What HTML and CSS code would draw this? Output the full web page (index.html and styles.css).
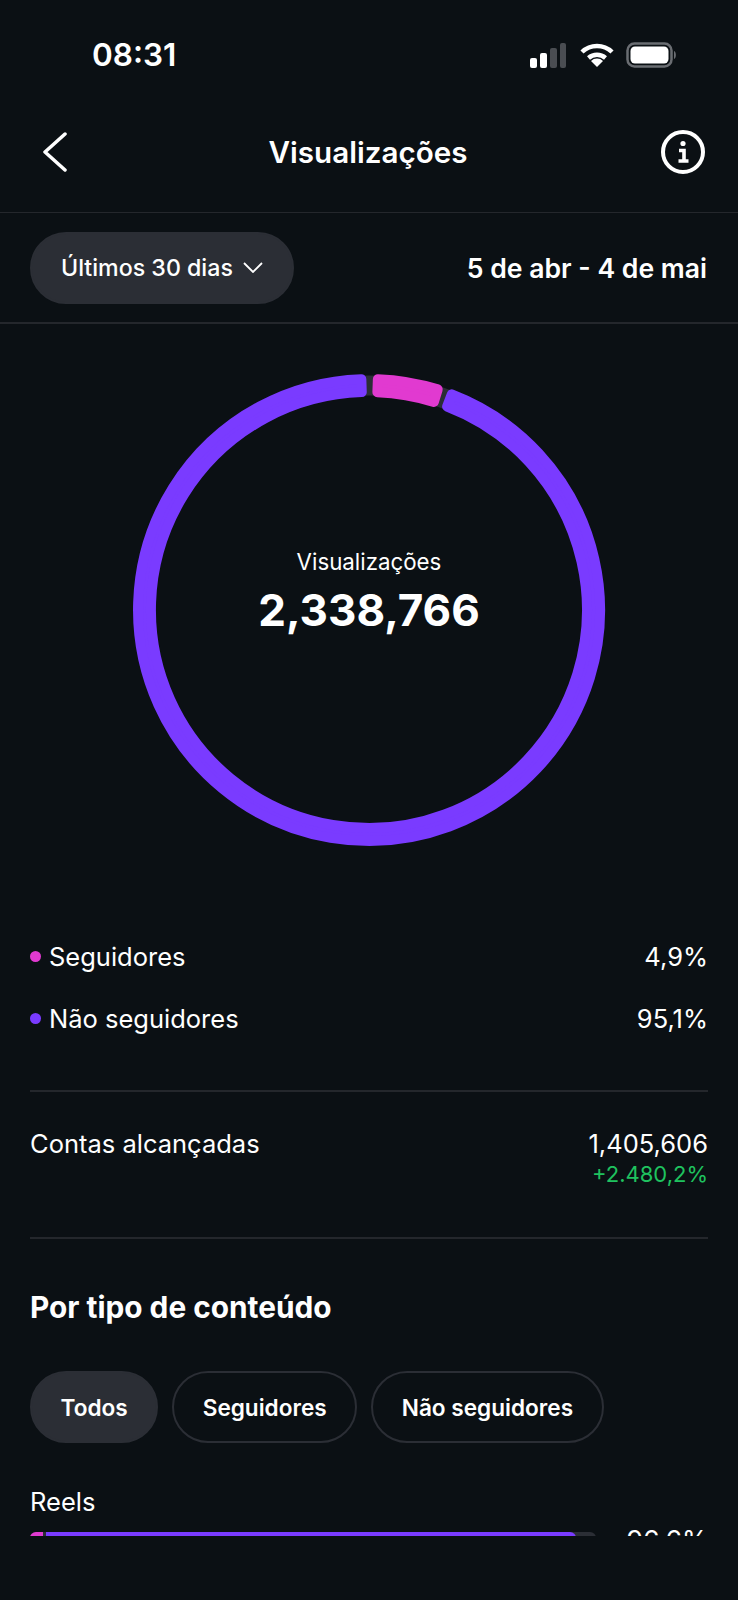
FILE: index.html
```html
<!DOCTYPE html>
<html>
<head>
<meta charset="utf-8" />
<title>Visualizações</title>
<link rel="stylesheet" href="styles.css">
</head>
<body>
<div class="screen">
	<div class="status">
		<span class="time">08:31</span>
		<div class="status-icons">
			<svg width="38" height="25" viewBox="0 0 38 25">
				<rect x="0" y="15" width="7" height="10" rx="2" fill="#fff"/>
				<rect x="10" y="10" width="7" height="15" rx="2" fill="#fff"/>
				<rect x="20" y="5" width="7" height="20" rx="2" fill="#4a4d52"/>
				<rect x="30" y="0" width="6" height="25" rx="2" fill="#4a4d52"/>
			</svg>
			<svg width="34" height="24" viewBox="0 0 34 24">
				<path d="M2 9 A21.5 21.5 0 0 1 32 9" class="wifi"/>
				<path d="M8.5 15 A13 13 0 0 1 25.5 15" class="wifi"/>
				<path d="M17 24 L11 18 A8.5 8.5 0 0 1 23 18 Z" fill="#fff"/>
			</svg>
			<svg width="52" height="26" viewBox="0 0 52 26">
				<rect x="1.5" y="1.5" width="44" height="23" rx="7" fill="none" stroke="#6a6d72" stroke-width="2.5"/>
				<rect x="4.5" y="4.5" width="38" height="17" rx="4.5" fill="#fff"/>
				<path d="M48 9 C50.5 10 50.5 16 48 17 Z" fill="#6a6d72"/>
			</svg>
		</div>
	</div>

	<div class="nav">
		<svg class="back" width="24" height="40" viewBox="0 0 24 40">
			<path d="M22 2 L2 20 L22 38"/>
		</svg>
		<h1>Visualizações</h1>
		<svg class="info" width="44" height="44" viewBox="0 0 44 44">
			<circle cx="22" cy="22" r="20"/>
			<circle cx="22" cy="13.5" r="2.6" class="solid"/>
			<path d="M18 20.5 H23 V31 M17.5 31 H27.5" class="thick"/>
		</svg>
	</div>

	<div class="range">
		<div class="pill active range-pill">
			Últimos 30 dias
			<svg width="20" height="11" viewBox="0 0 20 11"><path d="M1 1 L10 10 L19 1"/></svg>
		</div>
		<span class="dates">5 de abr - 4 de mai</span>
	</div>

	<div class="chart">
		<svg width="480" height="480" viewBox="-240 -240 480 480">
			<circle r="224.5" class="track"/>
			<path class="seg purple" d="M82.8 -215.66 A231 231 0 1 1 -7.66 -230.87 L-7.23 -217.88 A218 218 0 1 0 78.1 -203.5 Z"/>
			<path class="seg pink" d="M8.87 -230.83 A231 231 0 0 1 68.7 -220.6 L64.83 -208.1 A218 218 0 0 0 8.37 -217.84 Z"/>
		</svg>
		<div class="chart-label">
			<span class="chart-title">Visualizações</span>
			<span class="chart-value">2,338,766</span>
		</div>
	</div>

	<div class="content">
		<div class="legend">
			<div class="row">
				<span class="key"><i class="dot dot-pink"></i>Seguidores</span>
				<span>4,9%</span>
			</div>
			<div class="row">
				<span class="key"><i class="dot dot-purple"></i>Não seguidores</span>
				<span>95,1%</span>
			</div>
		</div>

		<div class="reach">
			<span>Contas alcançadas</span>
			<div class="reach-nums">
				<span>1,405,606</span>
				<span class="up">+2.480,2%</span>
			</div>
		</div>

		<h2>Por tipo de conteúdo</h2>

		<div class="tabs">
			<div class="pill active">Todos</div>
			<div class="pill">Seguidores</div>
			<div class="pill">Não seguidores</div>
		</div>

		<div class="type-name">Reels</div>
		<div class="type-row">
			<div class="bar">
				<div class="bar-pink"></div>
				<div class="bar-purple"></div>
			</div>
			<span class="type-val">96,6%</span>
		</div>
	</div>
</div>
</body>
</html>
```

FILE: styles.css
```css
html, body {
	margin: 0;
	background: #0b1014;
}
body {
	color: #fff;
	font-family: Inter, "Liberation Sans", sans-serif;
}
h1, h2 {
	margin: 0;
}

.screen {
	width: 738px;
	height: 1536px;
	overflow: hidden;
}

/* status bar */
.status {
	height: 110px;
	box-sizing: border-box;
	padding: 37px 60px 0 92px;
	display: flex;
	justify-content: space-between;
	align-items: flex-start;
}
.time {
	font-size: 31.5px;
	font-weight: 600;
	line-height: 36px;
}
.status-icons {
	display: flex;
	align-items: center;
	gap: 12px;
	padding-top: 5px;
}
.wifi {
	fill: none;
	stroke: #fff;
	stroke-width: 4.5;
}

/* nav */
.nav {
	height: 103px;
	box-sizing: border-box;
	padding: 0 33px 18px 43px;
	border-bottom: 1px solid #24272c;
	display: flex;
	justify-content: space-between;
	align-items: center;
}
.nav h1 {
	font-size: 29.6px;
	font-weight: 600;
	margin-left: 8px;
}
.back path {
	fill: none;
	stroke: #fff;
	stroke-width: 3.5;
	stroke-linecap: round;
	stroke-linejoin: round;
}
.info circle {
	fill: none;
	stroke: #fff;
	stroke-width: 4;
}
.info .solid {
	fill: #fff;
	stroke: none;
}
.info .thick {
	fill: none;
	stroke: #fff;
	stroke-width: 3.6;
}

/* date range */
.range {
	height: 111px;
	box-sizing: border-box;
	padding: 0 31px 0 30px;
	border-bottom: 2px solid #24272c;
	display: flex;
	justify-content: space-between;
	align-items: center;
}
.dates {
	font-size: 26.6px;
	font-weight: 600;
}
.pill {
	height: 72px;
	box-sizing: border-box;
	padding: 0 28.5px;
	border: 2px solid #2b2e35;
	border-radius: 36px;
	display: flex;
	align-items: center;
	gap: 10px;
	font-size: 22.6px;
	font-weight: 600;
}
.pill.active {
	background: #2b2e35;
}
.range-pill {
	padding: 0 29px;
	font-size: 23.2px;
	font-weight: 500;
}
.pill svg path {
	fill: none;
	stroke: #fff;
	stroke-width: 1.8;
}

/* ring */
.chart {
	display: grid;
	justify-content: center;
	align-items: center;
	height: 586px;
	box-sizing: border-box;
	padding-bottom: 14px;
}
.chart svg, .chart-label {
	grid-area: 1 / 1;
}
.chart svg {
	display: block;
}
.track {
	fill: none;
	stroke: #2b2e35;
	stroke-width: 20;
}
.seg {
	stroke-width: 10;
	stroke-linejoin: round;
}
.purple {
	fill: #7a3bff;
	stroke: #7a3bff;
}
.pink {
	fill: #e13ad0;
	stroke: #e13ad0;
}
.chart-label {
	display: flex;
	flex-direction: column;
	align-items: center;
	padding-bottom: 28px;
}
.chart-title {
	font-size: 22.3px;
	line-height: 28px;
}
.chart-value {
	font-size: 44px;
	font-weight: 700;
	line-height: 68px;
}

/* lower part */
.content {
	padding: 0 30px;
	font-size: 25.5px;
}
.legend {
	padding-top: 15px;
	height: 182px;
	box-sizing: border-box;
	border-bottom: 2px solid #24272c;
}
.row {
	height: 62px;
	display: flex;
	justify-content: space-between;
	align-items: center;
}
.key {
	display: flex;
	align-items: center;
}
.dot {
	width: 11px;
	height: 11px;
	border-radius: 50%;
	margin-right: 8px;
}
.dot-pink {
	background: #e13ad0;
}
.dot-purple {
	background: #7a3bff;
}
.reach {
	height: 147px;
	box-sizing: border-box;
	padding-top: 36px;
	border-bottom: 2px solid #24272c;
	display: flex;
	justify-content: space-between;
	line-height: 32px;
}
.reach-nums {
	display: flex;
	flex-direction: column;
	align-items: flex-end;
}
.up {
	color: #1fc25f;
	font-size: 22px;
	line-height: 28px;
}
h2 {
	font-size: 29.8px;
	font-weight: 700;
	line-height: 36px;
	padding-top: 50px;
}
.tabs {
	display: flex;
	gap: 14px;
	padding-top: 46px;
}
.type-name {
	padding-top: 43px;
	line-height: 32px;
}
.type-row {
	display: flex;
	justify-content: space-between;
	align-items: flex-start;
	padding-top: 12px;
}
.bar {
	width: 566px;
	height: 12px;
	margin-top: 2px;
	border-radius: 6px;
	background: #2b2e35;
	display: flex;
	gap: 3px;
	overflow: hidden;
}
.bar-pink {
	width: 13px;
	background: #e13ad0;
}
.bar-purple {
	width: 530px;
	background: #7a3bff;
	border-radius: 0 6px 6px 0;
}
.type-val {
	font-size: 26.5px;
	line-height: 32px;
	margin-top: -6px;
}
```
